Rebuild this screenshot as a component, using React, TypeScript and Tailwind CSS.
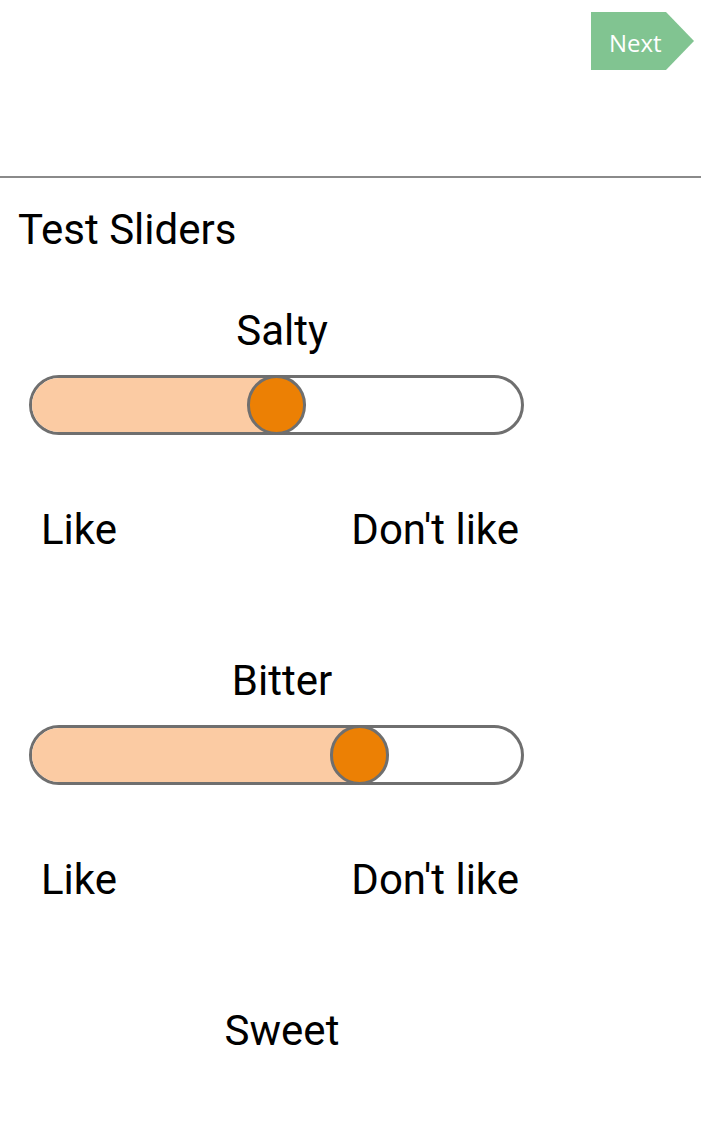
import { useState } from 'react';

interface TasteSlider {
  label: string;
  value: number;
}

function Slider({ label, value }: TasteSlider) {
  // thumb is 59px, track 495px wide -> travel 436px
  const travel = 436;
  const left = (value / 100) * travel;
  return (
    <div className="flex flex-col">
      <div className="w-[528px] text-center text-[42px] leading-[48px] text-black">{label}</div>
      <div className="relative ml-[11px] mt-[20px] h-[60px] w-[495px] overflow-hidden rounded-full border-[3px] border-[#6f6f6f] bg-white">
        <div className="h-full bg-[#fbcba3]" style={{ width: left + 29 }} />
      </div>
      <div className="relative ml-[11px] w-[495px]">
        <div
          className="absolute -top-[60px] h-[60px] w-[59px] rounded-full border-[3px] border-[#6f6f6f] bg-[#ec8004]"
          style={{ left }}
        />
      </div>
      <div className="mt-[71px] flex w-[501px] justify-between pl-[23px] text-[42px] leading-[48px] text-black">
        <span>Like</span>
        <span>Don't like</span>
      </div>
    </div>
  );
}

export default function App() {
  const [sliders] = useState<TasteSlider[]>([
    { label: 'Salty', value: 50 },
    { label: 'Bitter', value: 69 },
    { label: 'Sweet', value: 50 },
  ]);

  return (
    <div className="min-h-[1139px] w-[701px] overflow-hidden bg-white font-['Roboto',sans-serif]">
      {/* Header */}
      <div className="flex h-[176px] justify-end pr-[7px] pt-[12px]">
        <button className="relative flex h-[58px] w-[103px] items-center">
          <svg className="absolute inset-0" width="103" height="58" viewBox="0 0 103 58">
            <polygon points="0,0 75,0 103,29 75,58 0,58" fill="#81c491" />
          </svg>
          <span className="relative ml-[18px] mt-[3px] font-['Open_Sans',sans-serif] text-[24px] leading-[30px] text-white">
            Next
          </span>
        </button>
      </div>
      <div className="h-[2px] bg-[#8a8a8a]" />

      {/* Content */}
      <div className="px-[18px] pt-[28px]">
        <div className="text-[42px] leading-[48px] text-black">Test Sliders</div>
        <div className="mt-[53px] flex flex-col gap-[103px]">
          {sliders.map((s, i) =>
            i < 2 ? (
              <Slider key={s.label} label={s.label} value={s.value} />
            ) : (
              <div key={s.label} className="w-[528px] text-center text-[42px] leading-[48px] text-black">
                {s.label}
              </div>
            ),
          )}
        </div>
      </div>
    </div>
  );
}
